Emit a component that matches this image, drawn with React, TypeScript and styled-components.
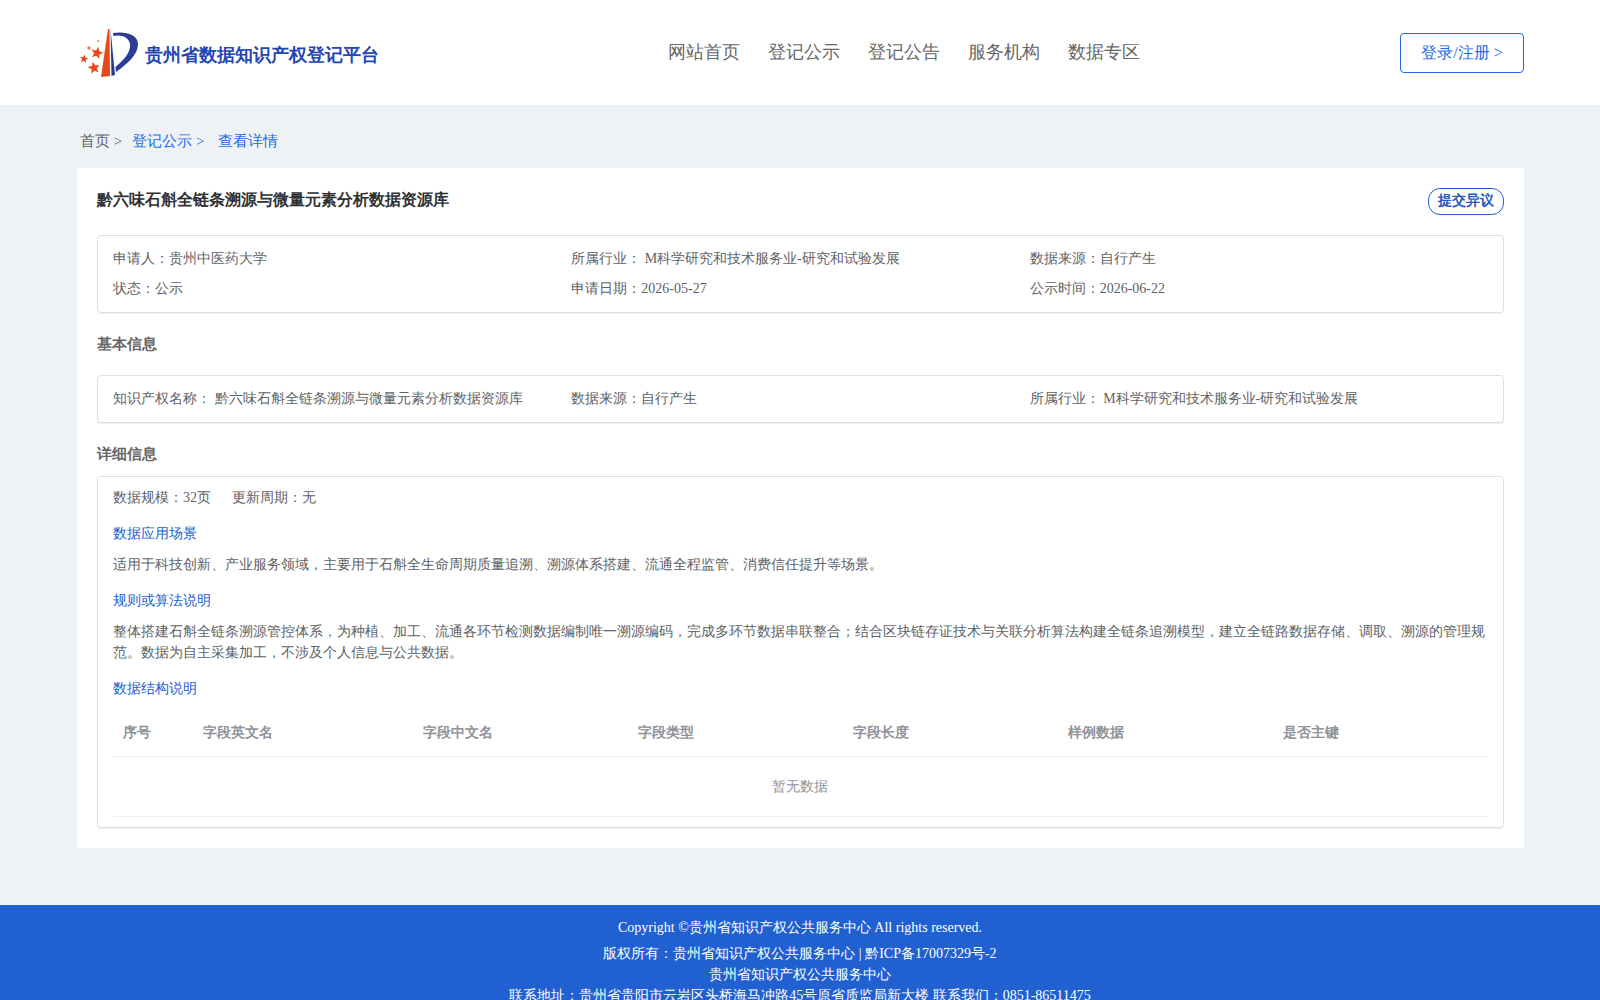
import React from "react";
import styled, { createGlobalStyle } from "styled-components";

const Global = createGlobalStyle`
  html, body { margin: 0; padding: 0; background: #eff2f5; }
  body { font-family: "Liberation Serif", serif; color: #606266; }
  * { box-sizing: border-box; }
`;

const Page = styled.div`
  width: 1600px;
  display: flex;
  flex-direction: column;
`;

const Header = styled.header`
  height: 105px;
  flex: none;
  background: #fff;
  display: grid;
  grid-template-columns: 591px 1fr auto;
  align-items: center;
  padding: 0 76px 0 77px;
`;

const Brand = styled.div`
  display: flex;
  align-items: center;
  gap: 7px;
  padding-left: 3px;
  margin-top: 1px;
`;

const BrandName = styled.span`
  font-size: 18px;
  font-weight: 700;
  color: #2346b3;
  margin-top: 4px;
`;

const Nav = styled.nav`
  display: flex;
  gap: 28px;
  margin-bottom: 2px;
`;

const NavItem = styled.a`
  font-size: 18px;
  color: #666;
  line-height: 24px;
`;

const Login = styled.button`
  width: 124px;
  height: 40px;
  background: #fff;
  border: 1px solid #1a6be8;
  border-radius: 4px;
  color: #1a6be8;
  font: inherit;
  font-size: 16px;
  padding: 2px 0 0;
`;

const Main = styled.main`
  padding: 0 76px 0 77px;
  flex: none;
`;

const Crumbs = styled.div`
  height: 63px;
  display: flex;
  align-items: center;
  padding: 9px 0 0 3px;
  font-size: 15px;
`;

const Crumb = styled.span<{ $link?: boolean; $gap?: number }>`
  color: ${(p) => (p.$link ? "#1a6be8" : "#606266")};
  margin-right: ${(p) => p.$gap ?? 0}px;
`;

const Card = styled.section`
  background: #fff;
  height: 680px;
  padding: 20px;
  display: flex;
  flex-direction: column;
`;

const TitleRow = styled.div`
  display: flex;
  justify-content: space-between;
  align-items: flex-start;
  height: 47px;
`;

const Title = styled.h1`
  margin: 0;
  font-size: 16px;
  line-height: 24px;
  font-weight: 700;
  color: #303133;
`;

const Objection = styled.button`
  width: 76px;
  height: 27px;
  border: 1px solid #2160d0;
  border-radius: 12px;
  background: #fff;
  color: #2459bf;
  font: inherit;
  font-size: 14px;
  font-weight: 700;
  padding: 0 0 1px;
`;

const Box = styled.div`
  border: 1px solid #dcdfe6;
  border-radius: 4px;
  box-shadow: 0 1px 1px rgba(0, 0, 0, 0.07);
`;

const InfoBox = styled(Box)`
  padding: 0 15px;
  display: grid;
  grid-template-columns: repeat(3, 1fr);
  align-content: center;
  row-gap: 8px;
  font-size: 14px;
  line-height: 22px;
`;

const InfoCell = styled.div``;

const SummaryBox = styled(InfoBox)`
  height: 78px;
`;

const BasicBox = styled(InfoBox)`
  height: 48px;
`;

const SectionHead = styled.h2<{ $h: number }>`
  margin: 0;
  height: ${(p) => p.$h}px;
  font-size: 15px;
  font-weight: 700;
  color: #666;
  line-height: 20px;
  padding-top: 21px;
`;

const DetailBox = styled(Box)`
  height: 352px;
  padding: 10px 15px 0;
  font-size: 14px;
  line-height: 21px;
`;

const Metrics = styled.div`
  display: flex;
  gap: 21px;
  height: 32px;
`;

const SubHead = styled.div`
  color: #2160d0;
  height: 35px;
  padding-top: 4px;
`;

const Para = styled.p`
  margin: 0 0 11px;
`;

const TableGrid = styled.div`
  display: grid;
  grid-template-columns: 80px 220px repeat(5, 215px);
  width: 100%;
  height: 45px;
  margin-top: 3px;
  border-bottom: 1px solid #ebeef5;
`;

const HeadCell = styled.div`
  padding: 10px 10px 0;
  font-weight: 700;
  color: #909399;
  line-height: 21px;
`;

const Empty = styled.div`
  height: 60px;
  border-bottom: 1px solid #ebeef5;
  color: #909399;
  display: flex;
  align-items: center;
  justify-content: center;
  padding-right: 2px;
`;

const Footer = styled.footer`
  flex: none;
  margin-top: 57px;
  background: #2160d0;
  color: #fff;
  text-align: center;
  font-size: 14px;
  padding: 12px 0 20px;
`;

const FooterTop = styled.div`
  line-height: 21px;
  margin-bottom: 5px;
`;

const FooterLine = styled.div`
  line-height: 21px;
`;

const starPoints = (cx: number, cy: number, r: number, rot: number) =>
  Array.from({ length: 10 }, (_, i) => {
    const rad = i % 2 === 0 ? r : r * 0.42;
    const a = ((rot + i * 36 - 90) * Math.PI) / 180;
    return `${(cx + rad * Math.cos(a)).toFixed(2)},${(cy + rad * Math.sin(a)).toFixed(2)}`;
  }).join(" ");

const Logo = () => (
  <svg width="58" height="50" viewBox="0 0 58 50" aria-hidden="true">
    <path d="M28 1 L21 49 L30 48 L29.5 1 Z" fill="#e8481a" />
    <path d="M30.5 1 L31.5 48 L35 47 Z" fill="#2a3b98" />
    <path d="M33 5 C44 3 58 6 58 16 C58 27 47 36 36 44 L35.5 39 C44 32 51 24 50 16 C49 9 41 6 33.5 8 Z" fill="#2a3b98" />
    <polygon points={starPoints(17, 25, 6.5, 15)} fill="#e8481a" />
    <polygon points={starPoints(14, 40, 6.5, -10)} fill="#e8481a" />
    <polygon points={starPoints(4, 31, 4.5, 10)} fill="#e8481a" />
    <circle cx="9" cy="20" r="1.7" fill="#ef7a55" />
    <circle cx="18" cy="13" r="1" fill="#ef7a55" />
  </svg>
);

const navItems = ["网站首页", "登记公示", "登记公告", "服务机构", "数据专区"];
const columns = ["序号", "字段英文名", "字段中文名", "字段类型", "字段长度", "样例数据", "是否主键"];

export default function App() {
  return (
    <Page>
      <Global />
      <Header>
        <Brand>
          <Logo />
          <BrandName>贵州省数据知识产权登记平台</BrandName>
        </Brand>
        <Nav>
          {navItems.map((n) => (
            <NavItem key={n}>{n}</NavItem>
          ))}
        </Nav>
        <Login>登录/注册 &gt;</Login>
      </Header>
      <Main>
        <Crumbs>
          <Crumb $gap={10}>首页 &gt;</Crumb>
          <Crumb $link $gap={14}>登记公示 &gt;</Crumb>
          <Crumb $link>查看详情</Crumb>
        </Crumbs>
        <Card>
          <TitleRow>
            <Title>黔六味石斛全链条溯源与微量元素分析数据资源库</Title>
            <Objection>提交异议</Objection>
          </TitleRow>
          <SummaryBox>
            <InfoCell>申请人：贵州中医药大学</InfoCell>
            <InfoCell>所属行业： M科学研究和技术服务业-研究和试验发展</InfoCell>
            <InfoCell>数据来源：自行产生</InfoCell>
            <InfoCell>状态：公示</InfoCell>
            <InfoCell>申请日期：2026-05-27</InfoCell>
            <InfoCell>公示时间：2026-06-22</InfoCell>
          </SummaryBox>
          <SectionHead $h={62}>基本信息</SectionHead>
          <BasicBox>
            <InfoCell>知识产权名称： 黔六味石斛全链条溯源与微量元素分析数据资源库</InfoCell>
            <InfoCell>数据来源：自行产生</InfoCell>
            <InfoCell>所属行业： M科学研究和技术服务业-研究和试验发展</InfoCell>
          </BasicBox>
          <SectionHead $h={53}>详细信息</SectionHead>
          <DetailBox>
            <Metrics>
              <span>数据规模：32页</span>
              <span>更新周期：无</span>
            </Metrics>
            <SubHead>数据应用场景</SubHead>
            <Para>适用于科技创新、产业服务领域，主要用于石斛全生命周期质量追溯、溯源体系搭建、流通全程监管、消费信任提升等场景。</Para>
            <SubHead>规则或算法说明</SubHead>
            <Para>整体搭建石斛全链条溯源管控体系，为种植、加工、流通各环节检测数据编制唯一溯源编码，完成多环节数据串联整合；结合区块链存证技术与关联分析算法构建全链条追溯模型，建立全链路数据存储、调取、溯源的管理规范。数据为自主采集加工，不涉及个人信息与公共数据。</Para>
            <SubHead>数据结构说明</SubHead>
            <TableGrid>
              {columns.map((c) => (
                <HeadCell key={c}>{c}</HeadCell>
              ))}
            </TableGrid>
            <Empty>暂无数据</Empty>
          </DetailBox>
        </Card>
      </Main>
      <Footer>
        <FooterTop>Copyright ©贵州省知识产权公共服务中心 All rights reserved.</FooterTop>
        <FooterLine>版权所有：贵州省知识产权公共服务中心 | 黔ICP备17007329号-2</FooterLine>
        <FooterLine>贵州省知识产权公共服务中心</FooterLine>
        <FooterLine>联系地址：贵州省贵阳市云岩区头桥海马冲路45号原省质监局新大楼 联系我们：0851-86511475</FooterLine>
      </Footer>
    </Page>
  );
}
